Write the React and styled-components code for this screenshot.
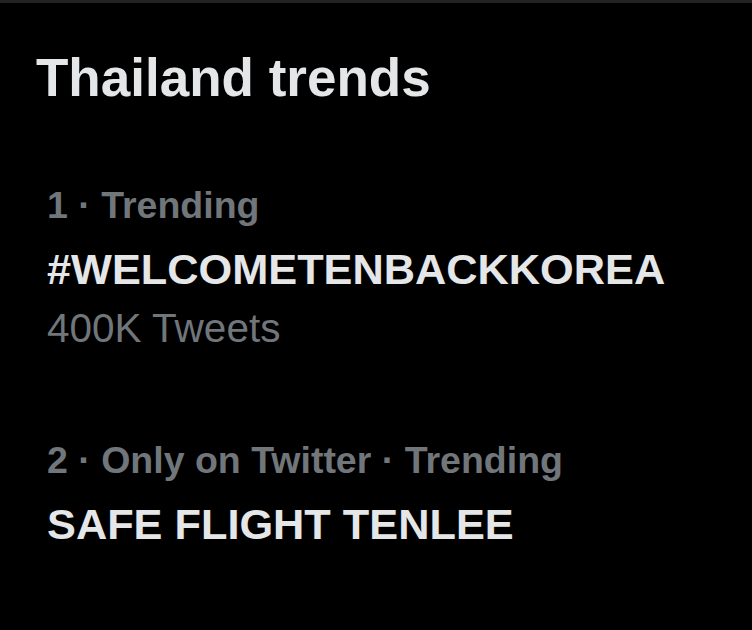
import React from "react";
import styled, { createGlobalStyle } from "styled-components";

const GlobalStyle = createGlobalStyle`
  html, body {
    margin: 0;
    padding: 0;
    background: #000000;
  }
  body {
    font-family: "Liberation Sans", Arial, sans-serif;
    -webkit-font-smoothing: antialiased;
  }
`;

const Panel = styled.section`
  min-height: 630px;
  box-sizing: border-box;
  background: #000000;
  border-top: 3px solid #222324;
  padding-top: 43px;
  display: flex;
  flex-direction: column;
`;

const Title = styled.h2`
  margin: 0 0 30px 0;
  padding: 0 0 0 36px;
  font-size: 53px;
  line-height: 64px;
  font-weight: 700;
  color: #e4e6e7;
`;

const TrendList = styled.div`
  display: flex;
  flex-direction: column;
`;

const TrendItem = styled.div`
  display: flex;
  flex-direction: column;
  padding: 43px 47px 43px 47px;
`;

const Meta = styled.div`
  font-size: 37.5px;
  line-height: 44px;
  font-weight: 700;
  color: #71767b;
  white-space: nowrap;
`;

const Topic = styled.div`
  margin-top: 16px;
  font-size: 43.3px;
  line-height: 52px;
  font-weight: 700;
  color: #e4e6e7;
  white-space: nowrap;
`;

const Count = styled.div`
  margin-top: 9px;
  font-size: 40.5px;
  line-height: 48px;
  font-weight: 400;
  color: #71767b;
  white-space: nowrap;
`;

const trends = [
  { meta: "1 · Trending", topic: "#WELCOMETENBACKKOREA", count: "400K Tweets" },
  { meta: "2 · Only on Twitter · Trending", topic: "SAFE FLIGHT TENLEE" },
];

export default function App() {
  return (
    <>
      <GlobalStyle />
      <Panel>
        <Title>Thailand trends</Title>
        <TrendList>
          {trends.map((t) => (
            <TrendItem key={t.topic}>
              <Meta>{t.meta}</Meta>
              <Topic>{t.topic}</Topic>
              {t.count && <Count>{t.count}</Count>}
            </TrendItem>
          ))}
        </TrendList>
      </Panel>
    </>
  );
}
